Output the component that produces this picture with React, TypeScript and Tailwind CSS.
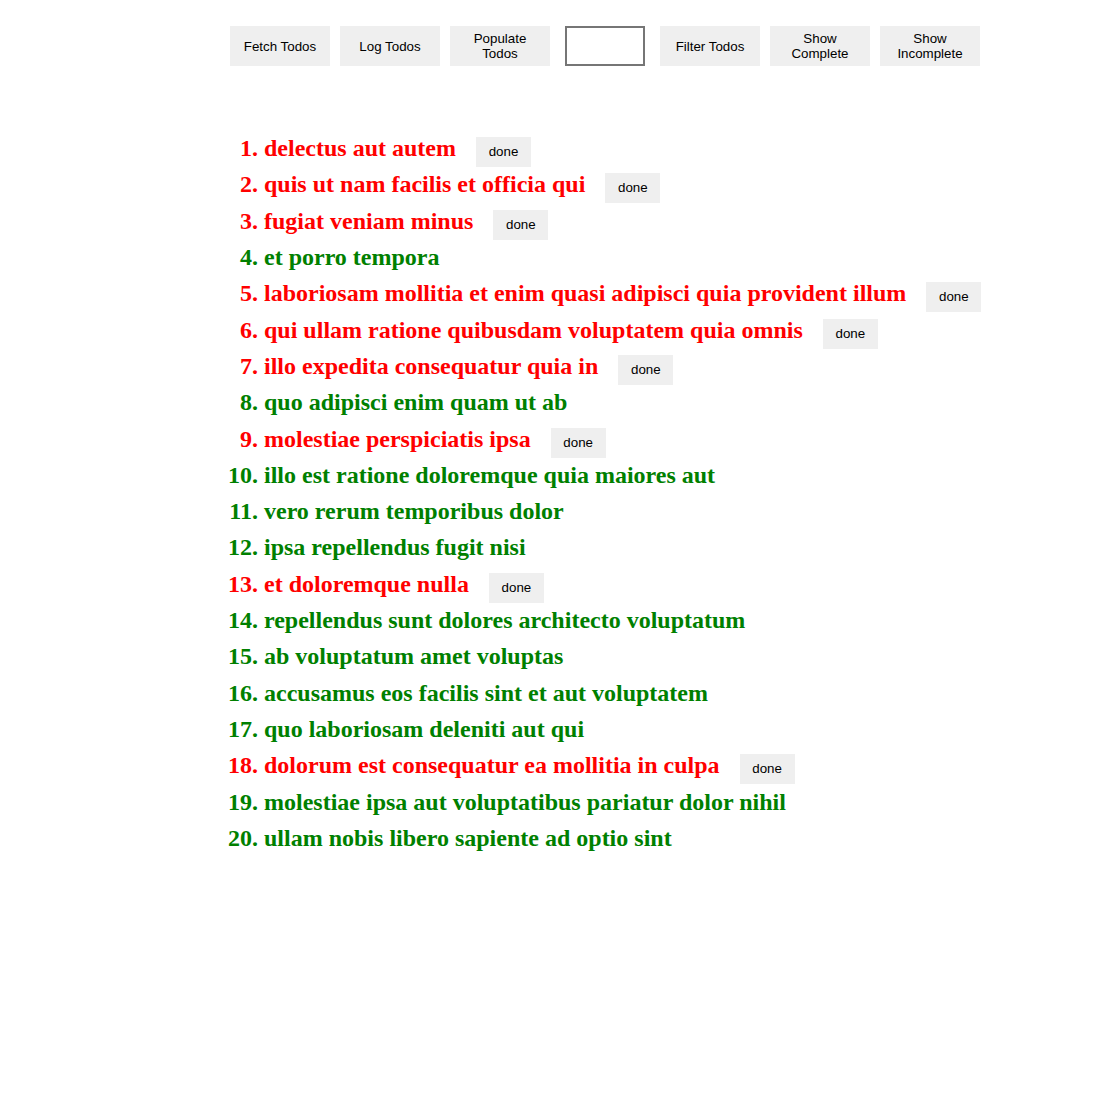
import React from "react";

const todos: { t: string; done: boolean }[] = [
  { t: "delectus aut autem", done: false },
  { t: "quis ut nam facilis et officia qui", done: false },
  { t: "fugiat veniam minus", done: false },
  { t: "et porro tempora", done: true },
  { t: "laboriosam mollitia et enim quasi adipisci quia provident illum", done: false },
  { t: "qui ullam ratione quibusdam voluptatem quia omnis", done: false },
  { t: "illo expedita consequatur quia in", done: false },
  { t: "quo adipisci enim quam ut ab", done: true },
  { t: "molestiae perspiciatis ipsa", done: false },
  { t: "illo est ratione doloremque quia maiores aut", done: true },
  { t: "vero rerum temporibus dolor", done: true },
  { t: "ipsa repellendus fugit nisi", done: true },
  { t: "et doloremque nulla", done: false },
  { t: "repellendus sunt dolores architecto voluptatum", done: true },
  { t: "ab voluptatum amet voluptas", done: true },
  { t: "accusamus eos facilis sint et aut voluptatem", done: true },
  { t: "quo laboriosam deleniti aut qui", done: true },
  { t: "dolorum est consequatur ea mollitia in culpa", done: false },
  { t: "molestiae ipsa aut voluptatibus pariatur dolor nihil", done: true },
  { t: "ullam nobis libero sapiente ad optio sint", done: true },
];

const sans = { fontFamily: '"Liberation Sans", Arial, sans-serif' };

function TopButton({ label }: { label: string }) {
  return (
    <button
      className="w-[100px] h-[40px] bg-[#efefef] text-black text-[13.333px] leading-[15px] px-[6px] flex items-center justify-center text-center"
      style={sans}
    >
      {label}
    </button>
  );
}

export default function App() {
  return (
    <div className="min-h-[1099px] bg-white">
      <div className="flex pt-[26px] pl-[230px] gap-[10px]">
        <TopButton label="Fetch Todos" />
        <TopButton label="Log Todos" />
        <TopButton label="Populate Todos" />
        <input className="w-[80px] h-[40px] mx-[5px] border-2 border-[#767676] bg-white" />
        <TopButton label="Filter Todos" />
        <TopButton label="Show Complete" />
        <TopButton label="Show Incomplete" />
      </div>
      <ol
        className="list-decimal pl-[264px] mt-[64px] font-bold text-[24px]"
        style={{ fontFamily: '"Liberation Serif", "Times New Roman", serif' }}
      >
        {todos.map((td, i) => (
          <li
            key={i}
            className={`h-[36.32px] leading-[36.32px] whitespace-nowrap ${td.done ? "text-[#008000]" : "text-[#ff0000]"}`}
          >
            <span>{td.t}</span>
            {!td.done && (
              <button
                className="inline-block align-baseline ml-[20px] w-[55px] h-[30px] bg-[#efefef] text-black text-[13.333px] leading-[30px] font-normal"
                style={sans}
              >
                done
              </button>
            )}
          </li>
        ))}
      </ol>
    </div>
  );
}
